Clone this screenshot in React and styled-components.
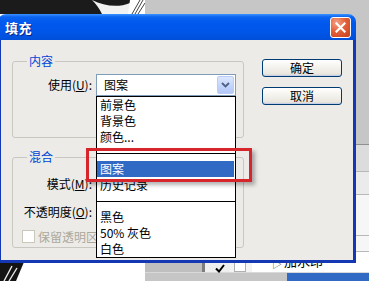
import React from 'react';
import styled, { createGlobalStyle } from 'styled-components';

const GlobalStyle = createGlobalStyle`
  html, body { margin: 0; padding: 0; }
  body {
    width: 369px;
    height: 281px;
    overflow: hidden;
    background: #c6c6c6;
    font-family: "Noto Sans CJK SC", "Noto Sans", sans-serif;
    font-size: 12px;
    color: #000;
  }
  * { box-sizing: border-box; }
`;

const Screen = styled.div`
  position: relative;
  width: 369px;
  height: 281px;
  overflow: hidden;
  display: flex;
`;

const Photo = styled.svg`
  flex: 0 0 145px;
  height: 281px;
  display: block;
  background: #fff;
`;

const Panel = styled.div`
  flex: 1;
  display: flex;
  flex-direction: column;
  background: #c6c6c6;
`;

const PanelBand = styled.div`
  height: ${p => p.$h}px;
  flex: none;
  background: ${p => p.$bg};
  border-bottom: 1px solid ${p => p.$line || '#b8b8b8'};
`;

const LayerRow = styled.div`
  height: 21px;
  flex: none;
  display: flex;
  align-items: flex-start;
  background: #fff;
  border-bottom: 1px solid #d8d8d8;
`;

const LayerGutter = styled.div`
  width: 60px;
  height: 100%;
  background: #bfbfbf;
  border-right: 3px solid #7c7c7c;
`;

const EyeCell = styled.div`
  width: 25px;
  height: 100%;
  background: #efefef;
  padding: 7px 0 0 10px;
`;

const MaskCell = styled.div`
  width: 22px;
  height: 100%;
  padding: 8px 0 0 4px;
  background: #f4f4f4;
  & > span {
    display: block;
    width: 12px;
    height: 12px;
    border: 1px solid #b0b0b0;
    background: #fff;
  }
`;

const Expander = styled.span`
  margin-left: 20px;
  padding-top: 6px;
  font-size: 10px;
  line-height: 12px;
  color: #333;
  width: 12px;
`;

const LayerName = styled.span`
  font-size: 13px;
  line-height: 16px;
  padding-top: 1px;
`;

const SelectedRow = styled.div`
  height: 20px;
  margin-left: 142px;
  background: #316ac5;
`;

/* ---------- dialog window ---------- */

const Window = styled.div`
  position: absolute;
  left: -2px;
  top: 14px;
  width: 358px;
  height: 249px;
  display: flex;
  flex-direction: column;
  border-radius: 8px 8px 0 0;
`;

const TitleBar = styled.div`
  height: 26px;
  flex: none;
  display: flex;
  align-items: center;
  justify-content: space-between;
  padding: 0 5px 0 7px;
  border-radius: 8px 8px 0 0;
  background: linear-gradient(
    to bottom,
    #3a93ff 0px,
    #0b63f0 3px,
    #0058ee 9px,
    #0056e8 18px,
    #004fd9 26px
  );
`;

const Title = styled.span`
  color: #fff;
  font-weight: bold;
  font-size: 13px;
  letter-spacing: 0.5px;
  text-shadow: 1px 1px 0 #0a1f8c;
`;

const CloseBtn = styled.div`
  width: 21px;
  height: 21px;
  border: 1px solid #fff;
  border-radius: 3px;
  background: radial-gradient(circle at 30% 25%, #f5a386 0%, #e4603a 45%, #c5401a 100%);
  display: flex;
  align-items: center;
  justify-content: center;
`;

const Body = styled.div`
  height: 223px;
  flex: none;
  display: flex;
  align-items: flex-start;
  gap: 18px;
  padding: 14px 0 0 11px;
  background: #ecebe8;
  border: 3px solid #1437b4;
  border-top: none;
`;

const LeftCol = styled.div`
  width: 232px;
  display: flex;
  flex-direction: column;
  gap: 12px;
`;

const Group = styled.fieldset`
  margin: 0;
  min-width: 0;
  border: 1px solid #c9c8c0;
  border-radius: 3px;
  padding: ${p => p.$pad};
`;

const GroupTitle = styled.legend`
  margin-left: 14px;
  padding: 0 2px;
  color: #0046d5;
  font-size: 12px;
  line-height: 14px;
`;

const FieldGrid = styled.div`
  display: grid;
  grid-template-columns: 80px 140px;
  column-gap: 3px;
  row-gap: 6px;
`;

const FieldLabel = styled.label`
  height: 22px;
  line-height: 22px;
  text-align: right;
  padding-right: 1px;
  white-space: nowrap;
  & u { text-decoration: underline; }
`;

const Combo = styled.div`
  position: relative;
  height: 22px;
  border: 1px solid #7f9db9;
  background: #fff;
  display: flex;
  align-items: center;
  padding-left: 7px;
`;

const ComboValue = styled.span`
  flex: 1;
  line-height: 20px;
`;

const ComboArrow = styled.div`
  width: 17px;
  height: 18px;
  margin-right: 1px;
  border: 1px solid #b8cdf7;
  border-radius: 2px;
  background: linear-gradient(to bottom, #dce7fd, #c1d3fb 60%, #b4c8f6);
  display: flex;
  align-items: center;
  justify-content: center;
`;

const DropList = styled.ul`
  position: absolute;
  z-index: 10;
  top: 21px;
  left: -1px;
  width: 140px;
  height: 162px;
  margin: 0;
  padding: 0;
  list-style: none;
  background: #fff;
  border: 1px solid #000;
`;

const DropItem = styled.li`
  height: 16px;
  line-height: 16px;
  padding-left: 3px;
  margin-right: 1px;
  white-space: nowrap;
  background: ${p => (p.$active ? '#316ac5' : 'transparent')};
  color: ${p => (p.$active ? '#fff' : '#000')};
`;

const DropSeparator = styled.li`
  height: 16px;
  display: flex;
  align-items: center;
  &::after {
    content: '';
    flex: 1;
    height: 1px;
    background: #000;
  }
`;

const SmallInput = styled.div`
  width: 44px;
  height: 22px;
  border: 1px solid #7f9db9;
  background: #fff;
`;

const CheckRow = styled.div`
  grid-column: 1 / -1;
  width: 83px;
  height: 15px;
  overflow: hidden;
  display: flex;
  align-items: center;
  gap: 3px;
  padding-left: 9px;
  color: #aca899;
  white-space: nowrap;
`;

const CheckBox = styled.span`
  width: 13px;
  height: 13px;
  flex: none;
  border: 1px solid #cac8bb;
  background: #fff;
`;

const ButtonCol = styled.div`
  width: 80px;
  margin-top: 5px;
  display: flex;
  flex-direction: column;
  gap: 10px;
`;

const Button = styled.div`
  height: 18px;
  border: 1px solid #003c74;
  border-radius: 3px;
  background: linear-gradient(to bottom, #ffffff 0%, #f5f4ef 40%, #e9e7df 85%, #d8d4ca 100%);
  box-shadow: inset 0 -1px 0 #c6cfe8;
  display: flex;
  align-items: center;
  justify-content: center;
  font-size: 12px;
  line-height: 16px;
`;

const Highlight = styled.div`
  position: absolute;
  left: 86px;
  top: 148px;
  width: 166px;
  height: 34px;
  border: 3px solid #d7262b;
  box-shadow: 3px 3px 4px rgba(0, 0, 0, 0.3);
  z-index: 20;
`;

const fillOptions = [
  '前景色',
  '背景色',
  '颜色...',
  null,
  '图案',
  '历史记录',
  null,
  '黑色',
  '50% 灰色',
  '白色',
];

export default function App() {
  return (
    <>
      <GlobalStyle />
      <Screen>
        <Photo viewBox="0 0 145 281">
          <path d="M0 0 H145 V14 H0 Z" fill="#1b1b1b" />
          <path d="M92 0 C104 6 118 8 130 3 L131 14 L102 14 C99 8 96 4 92 0 Z" fill="#f2f2f2" />
          <path d="M130 0 H145 V14 H128 Z" fill="#fff" />
          <path d="M132 14 L140 0 M135 14 L143 0 M138 14 L145 3" stroke="#444" strokeWidth="1" />
          <path d="M0 262 H24 L16 281 H0 Z" fill="#141414" />
          <path d="M4 281 L12 266 M9 281 L17 268" stroke="#e8e8e8" strokeWidth="1.4" />
        </Photo>
        <Panel>
          <PanelBand $h={145} $bg="#c6c6c6" $line="#8f8f8f" />
          <PanelBand $h={27} $bg="#dcdcdc" />
          <PanelBand $h={23} $bg="#ebebeb" />
          <PanelBand $h={41} $bg="#f6f6f6" />
          <PanelBand $h={16} $bg="#f6f6f6" />
          <LayerRow>
            <LayerGutter />
            <EyeCell>
              <svg width="10" height="9" viewBox="0 0 10 9">
                <path d="M1 4.5 L4 7.5 L9 1" fill="none" stroke="#000" strokeWidth="2" />
              </svg>
            </EyeCell>
            <MaskCell><span /></MaskCell>
            <Expander>▷</Expander>
            <LayerName>加水印</LayerName>
          </LayerRow>
          <SelectedRow />
        </Panel>

        <Window>
          <TitleBar>
            <Title>填充</Title>
            <CloseBtn>
              <svg width="11" height="11" viewBox="0 0 11 11">
                <path d="M1.5 1.5 L9.5 9.5 M9.5 1.5 L1.5 9.5" stroke="#fff" strokeWidth="2.2" strokeLinecap="square" />
              </svg>
            </CloseBtn>
          </TitleBar>
          <Body>
            <LeftCol>
              <Group $pad="6px 6px 41px 0">
                <GroupTitle>内容</GroupTitle>
                <FieldGrid>
                  <FieldLabel>使用(<u>U</u>):</FieldLabel>
                  <Combo>
                    <ComboValue>图案</ComboValue>
                    <ComboArrow>
                      <svg width="9" height="6" viewBox="0 0 9 6">
                        <path d="M1 1 L4.5 4.5 L8 1" fill="none" stroke="#4d6185" strokeWidth="1.8" />
                      </svg>
                    </ComboArrow>
                    <DropList>
                      {fillOptions.map((opt, i) =>
                        opt === null ? (
                          <DropSeparator key={i} />
                        ) : (
                          <DropItem key={i} $active={opt === '图案'}>{opt}</DropItem>
                        )
                      )}
                    </DropList>
                  </Combo>
                </FieldGrid>
              </Group>
              <Group $pad="9px 6px 3px 0">
                <GroupTitle>混合</GroupTitle>
                <FieldGrid>
                  <FieldLabel>模式(<u>M</u>):</FieldLabel>
                  <Combo />
                  <FieldLabel>不透明度(<u>O</u>):</FieldLabel>
                  <SmallInput />
                  <CheckRow>
                    <CheckBox />
                    保留透明区
                  </CheckRow>
                </FieldGrid>
              </Group>
            </LeftCol>
            <ButtonCol>
              <Button>确定</Button>
              <Button>取消</Button>
            </ButtonCol>
          </Body>
        </Window>
        <Highlight />
      </Screen>
    </>
  );
}
